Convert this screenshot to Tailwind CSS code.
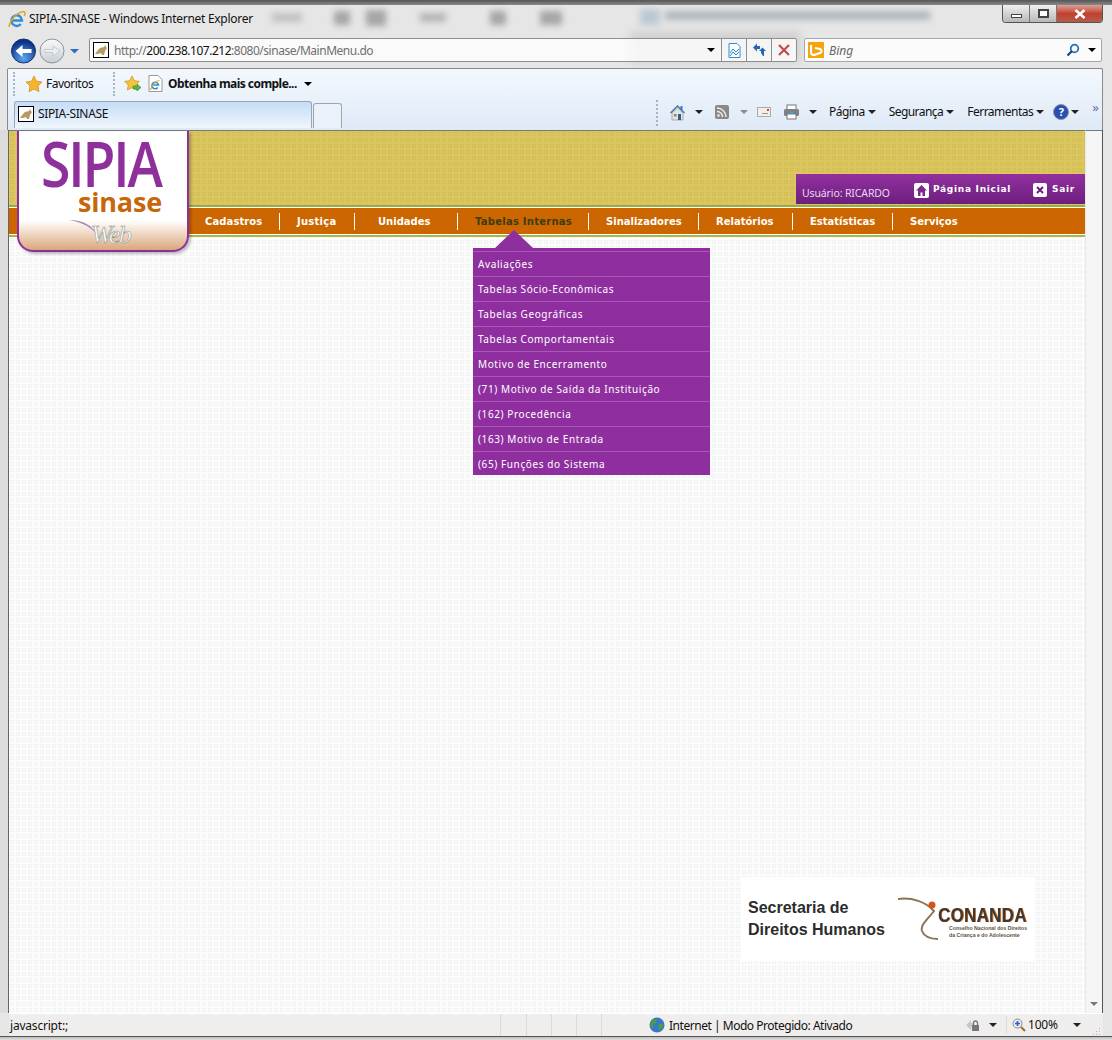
<!DOCTYPE html>
<html lang="pt-BR">
<head>
  <meta charset="UTF-8" />
  <title>SIPIA-SINASE - Windows Internet Explorer</title>
  <script src="https://cdn.jsdelivr.net/npm/@tailwindcss/browser@4"></script>
</head>
<body class="bg-[#e6e6e6]">
<div class="relative w-[1112px] h-[1040px] overflow-hidden flex flex-col bg-[#e6e6e6] font-['Noto_Sans',sans-serif] text-[12px] text-black">

  <!-- vidro desfocado atras da janela -->
  <div class="absolute left-0 top-0 w-[1112px] h-[5px] bg-gradient-to-b from-[#555] to-[#8a8a8a]"></div>
  <div class="absolute left-[272px] top-[13px] w-[30px] h-[9px] blur-[3px] bg-[#b0b0b0]/70"></div>
  <div class="absolute left-[334px] top-[11px] w-[16px] h-[14px] blur-[3px] bg-[#8a8a8a]/70"></div>
  <div class="absolute left-[366px] top-[10px] w-[20px] h-[16px] blur-[3px] bg-[#8a8a8a]/70"></div>
  <div class="absolute left-[420px] top-[13px] w-[26px] h-[9px] blur-[3px] bg-[#a0a0a0]/70"></div>
  <div class="absolute left-[490px] top-[11px] w-[16px] h-[14px] blur-[3px] bg-[#8a8a8a]/70"></div>
  <div class="absolute left-[540px] top-[11px] w-[22px] h-[14px] blur-[3px] bg-[#8a8a8a]/70"></div>
  <div class="absolute left-[640px] top-[9px] w-[20px] h-[16px] blur-[3px] bg-[#a8bccc]/70"></div>
  <div class="absolute left-[665px] top-[11px] w-[265px] h-[9px] blur-[3px] bg-[#9aa2aa]/70"></div>
  <div class="absolute left-[630px] top-[32px] w-[170px] h-[30px] blur-[5px] bg-[#c4c4c4]/70"></div>

  <!-- barra de titulo -->
  <div class="relative h-[38px] flex items-start pl-[8px] pt-[10px] shrink-0">
    <svg width="18" height="18" viewBox="0 0 18 18" class="mr-[3px]">
      <path d="M4 10.500h10A5.300 5.300 0 1 0 12.800 14" fill="none" stroke="#2e8fd8" stroke-width="2.400"/>
      <path d="M1 17C2 9 10 2 15.500 1.500c1.800 0 1.800 2.500.7 4.500" fill="none" stroke="#e8a322" stroke-width="1.500"/>
    </svg>
    <span class="leading-[17px] tracking-[-0.28px] text-[#111]">SIPIA-SINASE - Windows Internet Explorer</span>
    <div class="absolute left-[1002px] top-[5px] w-[101px] h-[18px] flex rounded-b-[4px] border border-t-0 border-[#555] overflow-hidden">
      <div class="w-[27px] bg-gradient-to-b from-[#f0f0f0] to-[#b8b8b8] border-r border-[#777] flex items-end justify-center pb-[4px]"><div class="w-[11px] h-[4px] border border-[#444] bg-white"></div></div>
      <div class="w-[27px] bg-gradient-to-b from-[#f0f0f0] to-[#b8b8b8] border-r border-[#777] flex items-center justify-center"><div class="w-[11px] h-[9px] border-2 border-[#444] bg-white"></div></div>
      <div class="flex-1 bg-gradient-to-b from-[#d9a098] via-[#c2402e] to-[#b55a4a] flex items-center justify-center">
        <svg width="12" height="10" viewBox="0 0 12 10"><path d="M1.500 1l9 8M10.500 1l-9 8" stroke="#fff" stroke-width="2.600"/></svg>
      </div>
    </div>
  </div>

  <!-- endereco e busca -->
  <div class="relative h-[30px] flex items-start shrink-0 pl-[11px]">
    <svg width="78" height="26" viewBox="0 0 78 26" class="w-[78px] shrink-0">
      <defs>
        <radialGradient id="azul" cx="50%" cy="80%" r="70%"><stop offset="0" stop-color="#5aa8f5"/><stop offset="1" stop-color="#0b2f86"/></radialGradient>
        <linearGradient id="cinza" x1="0" y1="0" x2="0" y2="1"><stop offset="0" stop-color="#fafafa"/><stop offset="1" stop-color="#c8ced4"/></linearGradient>
      </defs>
      <circle cx="12.500" cy="13" r="12" fill="url(#azul)" stroke="#1c2f66"/>
      <path d="M4.500 13l7-6v4h9v4h-9v4z" fill="#fff"/>
      <circle cx="41" cy="13" r="12" fill="url(#cinza)" stroke="#8c959c"/>
      <path d="M49 13l-7-5v3.500h-8v3h8V18z" fill="#eceff2" stroke="#b8bec4" stroke-width=".7"/>
      <path d="M59 11h9l-4.500 4.500z" fill="#2a6fc0"/>
    </svg>
    <div class="w-[708px] h-[24px] bg-white/80 border border-[#8e8e8e] rounded-[2px] flex items-center shrink-0">
      <svg width="16" height="16" viewBox="0 0 16 16" class="ml-[3px] mr-[5px] shrink-0">
        <rect x=".5" y=".5" width="15" height="15" fill="#fff" stroke="#000"/>
        <path d="M2 12l3-4 2-2 4-1 1-2 1 2 1 1-2 3-1 4H9l-1-2-3 1z" fill="#b59a63"/>
      </svg>
      <span class="mt-[1px] text-[#6f6f6f] tracking-[-0.48px]">http://<span class="text-[#111]">200.238.107.212</span>:8080/sinase/MainMenu.do</span>
      <div class="ml-auto mr-[6px] w-0 h-0 border-x-[4px] border-t-[4px] border-x-transparent border-t-black"></div>
      <div class="w-[25px] h-full border-l border-[#8e8e8e] flex items-center justify-center">
        <svg width="13" height="15" viewBox="0 0 13 15"><path d="M1 .5h8l3 3v11H1z" fill="#fff" stroke="#2f8ed0"/><path d="M2 10l3-4 3 3 3-3M2 13l3-4 3 3 3-3" fill="none" stroke="#2f8ed0"/></svg>
      </div>
      <div class="w-[25px] h-full border-l border-[#8e8e8e] flex items-center justify-center">
        <svg width="15" height="14" viewBox="0 0 15 14"><path d="M1 4.500l4-4v2.500h3v3H5v2.500zM14 8l-3.500-3.500L7 8h2v2l2 3h1V8z" fill="#2566ac"/></svg>
      </div>
      <div class="w-[25px] h-full border-l border-[#8e8e8e] flex items-center justify-center">
        <svg width="12" height="12" viewBox="0 0 12 12"><path d="M1 1l10 10M11 1L1 11" stroke="#c84a4a" stroke-width="2.200"/></svg>
      </div>
    </div>
    <div class="ml-[7px] w-[298px] h-[24px] bg-white/85 border border-[#a8a8a8] rounded-[2px] flex items-center shrink-0">
      <div class="ml-[3px] w-[16px] h-[16px] bg-[#f7a30f] flex items-center justify-center">
        <svg width="14" height="12" viewBox="0 0 14 12"><path d="M2 1v7a3 3 0 0 0 3 3l6-2c2-1 2-3 0-4L6 4" fill="none" stroke="#fff" stroke-width="2.200"/></svg>
      </div>
      <span class="ml-[5px] mt-[1px] italic text-[#666]">Bing</span>
      <svg width="14" height="14" viewBox="0 0 14 14" class="ml-auto mr-[8px]"><circle cx="8.500" cy="5.500" r="3.800" fill="none" stroke="#2a70c0" stroke-width="1.800"/><path d="M6 8l-4.500 4.500" stroke="#17417c" stroke-width="2.200"/></svg>
      <div class="mr-[5px] w-0 h-0 border-x-[4px] border-t-[4px] border-x-transparent border-t-black"></div>
    </div>
  </div>

  <!-- painel favoritos e abas -->
  <div class="ml-[7px] w-[1096px] h-[62px] shrink-0 border border-[#8a8a8a] border-b-0 bg-gradient-to-b from-[#f3f8fd] to-[#dfeaf7] flex flex-col rounded-t-[2px]">
    <div class="h-[31px] flex items-center shrink-0 relative pb-[2px]">
      <div class="ml-[5px] h-[24px] border-l-2 border-dotted border-[#a9b4bf]"></div>
      <svg width="18" height="18" viewBox="0 0 18 18" class="ml-[10px] shrink-0"><path d="M9 1l2.500 5.200 5.500.8-4 4 1 5.700L9 14l-5 2.700 1-5.700-4-4 5.500-.8z" fill="#f7b52b" stroke="#cb8a18" stroke-width=".7"/></svg>
      <span class="ml-[3px] w-[64px] text-[#111] tracking-[-0.5px]">Favoritos</span>
      <div class="ml-[3px] h-[24px] border-l-2 border-dotted border-[#a9b4bf]"></div>
      <svg width="18" height="18" viewBox="0 0 18 18" class="ml-[9px] shrink-0"><path d="M8 1l2.300 4.700 5 .7-3.600 3.600.9 5L8 12.600 3.400 15l.9-5L.7 6.400l5-.7z" fill="#f7c53b" stroke="#cb8a18" stroke-width=".7"/><path d="M9 11h4V9l4 3.500-4 3.500v-2H9z" fill="#5cb83c" stroke="#2f7d1e" stroke-width=".5"/></svg>
      <svg width="15" height="17" viewBox="0 0 15 17" class="ml-[6px] shrink-0"><path d="M1 .5h9l4 4v12H1z" fill="#fff" stroke="#999"/><path d="M4 10h6.500A3.300 3.300 0 1 0 9.800 12.600" fill="none" stroke="#2e8fd8" stroke-width="1.600"/><path d="M2.500 15c1.500-5 5-9 9-9.500" fill="none" stroke="#e8a322" stroke-width="1.100"/></svg>
      <span class="ml-[5px] font-bold tracking-[-0.55px] text-[#111]">Obtenha mais comple...</span>
      <div class="ml-[7px] w-0 h-0 border-x-[4px] border-t-[4px] border-x-transparent border-t-black"></div>
    </div>
    <div class="flex-1 flex items-start relative">
      <div class="ml-[6px] mt-[1px] w-[298px] h-[27px] shrink-0 rounded-t-[3px] border border-b-0 border-[#9aa6b2] bg-gradient-to-b from-[#c4dcf6] to-[#f0f6fc] flex items-center pl-[3px] pb-[2px]">
        <svg width="16" height="16" viewBox="0 0 16 16" class="shrink-0">
          <rect x=".5" y=".5" width="15" height="15" fill="#fff" stroke="#000"/>
          <path d="M2 12l3-4 2-2 4-1 1-2 1 2 1 1-2 3-1 4H9l-1-2-3 1z" fill="#b59a63"/>
        </svg>
        <span class="ml-[4px] tracking-[-0.35px] text-[#111]">SIPIA-SINASE</span>
      </div>
      <div class="ml-[1px] mt-[3px] w-[29px] h-[25px] shrink-0 rounded-t-[3px] border border-b-0 border-[#9aa6b2] bg-[#eaf1f9]"></div>
      <div class="ml-[314px] h-[26px] border-l-2 border-dotted border-[#a9b4bf]"></div>
      <div class="flex items-center h-[24px]">
        <svg width="17" height="17" viewBox="0 0 17 17" class="ml-[11px] shrink-0"><path d="M1 8.500L8.500 1l3 3V2h2v4l2.500 2.500-1 1-6.500-6.500L2 9.500z" fill="#3b78b8"/><path d="M3 9l5.500-5L14 9v7H3z" fill="#e9e4d4" stroke="#8b8672" stroke-width=".6"/><rect x="9" y="10" width="3" height="6" fill="#2a5f9e"/><rect x="5" y="10" width="2.500" height="2.500" fill="#5a8dc0"/></svg>
        <div class="ml-[9px] w-0 h-0 border-x-[4px] border-t-[4px] border-x-transparent border-t-[#222]"></div>
        <div class="ml-[12px] w-[14px] h-[14px] rounded-[2px] bg-[#8a8a84] flex items-center justify-center">
          <svg width="10" height="10" viewBox="0 0 10 10"><circle cx="1.500" cy="8.500" r="1.300" fill="#eee"/><path d="M0 4.500A5.500 5.500 0 0 1 5.500 10M0 1a9 9 0 0 1 9 9" fill="none" stroke="#eee" stroke-width="1.400"/></svg>
        </div>
        <div class="ml-[11px] w-0 h-0 border-x-[4px] border-t-[4px] border-x-transparent border-t-[#8a8a8a]"></div>
        <div class="ml-[9px] w-[14px] h-[10px] border border-[#aaa] bg-[#f2efe8] relative"><div class="absolute right-[1px] top-[1px] w-[2px] h-[2px] bg-[#d04040]"></div><div class="absolute left-[4px] bottom-[2px] w-[6px] h-px bg-[#999]"></div></div>
        <svg width="17" height="16" viewBox="0 0 17 16" class="ml-[12px] shrink-0"><rect x="4" y="1" width="9" height="5" fill="#fff" stroke="#777"/><rect x="1" y="5" width="15" height="7" rx="1.500" fill="#7d8288"/><rect x="4" y="10" width="9" height="5" fill="#fff" stroke="#777"/><rect x="7" y="8" width="3" height="2" fill="#3aa0e0"/></svg>
        <div class="ml-[9px] w-0 h-0 border-x-[4px] border-t-[4px] border-x-transparent border-t-[#222]"></div>
        <span class="ml-[12px] tracking-[-0.5px] text-[#111]">Página</span>
        <div class="ml-[3px] w-0 h-0 border-x-[4px] border-t-[4px] border-x-transparent border-t-[#222]"></div>
        <span class="ml-[13px] tracking-[-0.55px] text-[#111]">Segurança</span>
        <div class="ml-[3px] w-0 h-0 border-x-[4px] border-t-[4px] border-x-transparent border-t-[#222]"></div>
        <span class="ml-[13px] tracking-[-0.5px] text-[#111]">Ferramentas</span>
        <div class="ml-[3px] w-0 h-0 border-x-[4px] border-t-[4px] border-x-transparent border-t-[#222]"></div>
        <div class="ml-[9px] w-[16px] h-[16px] rounded-full bg-[#2a4fb0] border border-[#8a93a8] text-white font-bold text-[11px] leading-[14px] text-center">?</div>
        <div class="ml-[2px] w-0 h-0 border-x-[4px] border-t-[4px] border-x-transparent border-t-[#222]"></div>
        <span class="ml-[13px] -mt-[9px] text-[13px] text-[#5a6fa8] leading-none">»</span>
      </div>
    </div>
  </div>

  <!-- area da pagina -->
  <div class="flex h-[883px] shrink-0">
    <div class="w-[9px] shrink-0 border-r border-[#666] bg-[#dcdcdc]"></div>
    <div class="relative w-[1076px] shrink-0 bg-[#fcfcfc] bg-[radial-gradient(circle,#fcfcfc_1px,#f0f3f3_1.600px,#f0f3f3_2px,transparent_2.500px)] bg-size-[6px_6px] border-t border-[#777] font-['DejaVu_Sans',sans-serif]">
      <div class="relative h-[76px] bg-[#dcc65e] bg-[radial-gradient(circle,#dcc65e_1px,#d1bd5a_1.600px,#d1bd5a_2px,transparent_2.500px)] bg-size-[6px_6px] border-b-2 border-[#9aae3c]">
        <div class="absolute right-0 top-[43px] w-[289px] h-[30px] bg-gradient-to-b from-[#93309f] to-[#6c1f7e] flex items-center text-white">
          <span class="ml-[6px] mt-[10px] w-[106px] text-[10.500px] tracking-[-0.12px] text-[#e6d8f0] font-['Noto_Sans',sans-serif] whitespace-nowrap">Usuário: RICARDO</span>
          <svg width="15" height="15" viewBox="0 0 15 15" class="ml-[6px] mt-[2px] shrink-0"><rect width="15" height="15" rx="2" fill="#fff"/><path d="M7.500 2L2 7.500h2V13h2.500V9.500h2V13H11V7.500h2z" fill="#7f2790"/></svg>
          <span class="ml-[4px] mt-[2px] w-[78px] text-[9px] font-bold tracking-[0.72px] whitespace-nowrap">Página Inicial</span>
          <div class="ml-[22px] mt-[2px] w-[14px] h-[14px] rounded-[2px] bg-white flex items-center justify-center">
            <svg width="8" height="8" viewBox="0 0 8 8"><path d="M1 1l6 6M7 1L1 7" stroke="#6c1f7e" stroke-width="2"/></svg>
          </div>
          <span class="ml-[5px] mt-[2px] text-[9px] font-bold tracking-[0.72px]">Sair</span>
        </div>
      </div>

      <!-- menu -->
      <div class="h-[30px] border-t border-white border-b-2 bg-[#cc6600] border-b-[#a5b84a] relative">
        <div class="absolute left-0 right-0 bottom-0 h-px bg-white"></div>
        <div class="flex h-[27px] pl-[179px] items-center text-[10px] font-bold text-white">
          <div class="w-[92px] pl-[17px] border-r border-white leading-[17px] tracking-[0.1px]">Cadastros</div>
          <div class="w-[75px] pl-[17px] border-r border-white leading-[17px] tracking-[0.25px]">Justiça</div>
          <div class="w-[103px] pl-[23px] border-r border-white leading-[17px]">Unidades</div>
          <div class="w-[131px] pl-[17px] border-r border-white leading-[17px] tracking-[0.25px] text-[#3d3d10]">Tabelas Internas</div>
          <div class="w-[110px] pl-[17px] border-r border-white leading-[17px]">Sinalizadores</div>
          <div class="w-[94px] pl-[17px] border-r border-white leading-[17px]">Relatórios</div>
          <div class="w-[100px] pl-[17px] border-r border-white leading-[17px]">Estatísticas</div>
          <div class="w-[100px] pl-[17px] leading-[17px]">Serviços</div>
        </div>
      </div>

      <!-- logo -->
      <div class="absolute left-[8px] top-0 w-[172px] h-[121px] rounded-b-[16px] border-2 border-t-0 border-[#8f2f9f] bg-gradient-to-b from-white from-75% to-[#d9a77c] shadow-[2px_2px_3px_rgba(0,0,0,0.25)]">
        <div class="absolute left-[22px] top-[8px] font-['Open_Sans',sans-serif] font-semibold text-[63px] leading-[48px] tracking-[-2.500px] text-[#8f2f9c] scale-x-[0.85] origin-left">SIPIA</div>
        <div class="absolute left-[59px] top-[59px] font-['Open_Sans',sans-serif] font-bold text-[27px] leading-[24px] tracking-[-0.2px] text-[#c8660a]">sinase</div>
        <svg width="50" height="20" viewBox="0 0 50 20" class="absolute left-[48px] top-[88px]"><path d="M2 1c14 0 24 5 30 18C27 9 15 3 2 1z" fill="#a888b8"/></svg>
        <div class="absolute left-[72px] top-[90px] font-['Liberation_Serif',serif] italic text-[26px] leading-[28px] tracking-[-1.500px] text-white [-webkit-text-stroke:0.6px_#8a9a94]">Web</div>
      </div>

      <!-- submenu -->
      <div class="absolute left-[486px] top-[99px] w-[38px] h-[18px] bg-[#8f2f9f] [clip-path:polygon(50%_0,100%_100%,0_100%)]"></div>
      <div class="absolute left-[464px] top-[117px] w-[237px] bg-[#8f2f9f] pt-[3px] text-[10px] tracking-[0.6px] text-white font-['Noto_Sans',sans-serif]">
        <div class="h-[25px] pl-[5px] border-t border-[#a959b5] leading-[25px]">Avaliações</div>
        <div class="h-[25px] pl-[5px] border-t border-[#a959b5] leading-[25px]">Tabelas Sócio-Econômicas</div>
        <div class="h-[25px] pl-[5px] border-t border-[#a959b5] leading-[25px]">Tabelas Geográficas</div>
        <div class="h-[25px] pl-[5px] border-t border-[#a959b5] leading-[25px]">Tabelas Comportamentais</div>
        <div class="h-[25px] pl-[5px] border-t border-[#a959b5] leading-[25px]">Motivo de Encerramento</div>
        <div class="h-[25px] pl-[5px] border-t border-[#a959b5] leading-[25px]">(71) Motivo de Saída da Instituição</div>
        <div class="h-[25px] pl-[5px] border-t border-[#a959b5] leading-[25px]">(162) Procedência</div>
        <div class="h-[25px] pl-[5px] border-t border-[#a959b5] leading-[25px]">(163) Motivo de Entrada</div>
        <div class="h-[24px] pl-[5px] border-t border-[#a959b5] leading-[25px]">(65) Funções do Sistema</div>
      </div>

      <!-- rodape parceiros -->
      <div class="absolute left-[732px] top-[746px] w-[293px] h-[84px] bg-white flex items-center font-['Liberation_Sans',sans-serif]">
        <div class="ml-[7px] w-[150px] text-[16px] leading-[22px] font-bold text-[#2c2c2c] whitespace-nowrap">Secretaria de<br>Direitos Humanos</div>
        <div class="relative w-[136px] h-[60px]">
          <svg width="56" height="46" viewBox="0 0 56 46" class="absolute left-0 top-[8px]"><path d="M0 2c14-2 28 3 36 12-6 8-14 14-12 20 2 5 8 8 16 8" fill="none" stroke="#8b7355" stroke-width="2"/><circle cx="34" cy="8" r="3.500" fill="#d2561e"/></svg>
          <div class="absolute left-[40px] top-[14px] text-[20px] leading-[24px] font-bold tracking-[0.3px] text-[#3d3a36] scale-x-[0.85] origin-left [text-shadow:1px_0_0_#d26a1e]">CONANDA</div>
          <div class="absolute left-[51px] top-[36px] text-[5.200px] leading-[6.500px] font-bold text-[#5c5246] whitespace-nowrap">Conselho Nacional dos Direitos<br>da Criança e do Adolescente</div>
        </div>
      </div>
    </div>

    <!-- barra de rolagem -->
    <div class="w-[17px] shrink-0 bg-[#f5f5f5] border-l border-[#e8e8e8] border-t border-t-[#777] flex flex-col justify-end items-center pb-[7px]">
      <div class="w-0 h-0 border-x-[4px] border-t-[4px] border-x-transparent border-t-[#777]"></div>
    </div>
    <div class="w-[1px] shrink-0 bg-[#555]"></div>
  </div>

  <!-- barra de status -->
  <div class="ml-[9px] mr-[9px] h-[23px] shrink-0 bg-[#f0eeec] border-t border-white flex items-center text-[#111] relative">
    <span class="ml-px mt-[2px] w-[490px] tracking-[-0.2px]">javascript:;</span>
    <div class="w-[26px] h-full border-l border-[#dcdad8]"></div>
    <div class="w-[25px] h-full border-l border-[#dcdad8]"></div>
    <div class="w-[25px] h-full border-l border-[#dcdad8]"></div>
    <div class="w-[25px] h-full border-l border-[#dcdad8]"></div>
    <div class="w-[48px] h-full border-l border-[#dcdad8]"></div>
    <svg width="16" height="16" viewBox="0 0 16 16" class="shrink-0"><circle cx="8" cy="8" r="7.500" fill="#3878c8"/><path d="M3 4c2-2 4-2 5-1l-1 3-3 1 1 3-2 1C1 9 1 6 3 4zM10 7l4 0c0 3-1 5-3 6l-2-3z" fill="#4c9e3e"/></svg>
    <span class="ml-[4px] mt-[1px] tracking-[-0.47px] whitespace-nowrap">Internet | Modo Protegido: Ativado</span>
    <div class="absolute left-[956px] top-[2px] flex items-center h-[18px]">
      <svg width="16" height="16" viewBox="0 0 16 16" class="shrink-0"><path d="M1 8l5-5v3h3v4H6v3z" fill="#c8c8c8"/><rect x="7" y="8" width="7" height="6" fill="#777"/><path d="M8.500 8V6a2 2 0 0 1 4 0v2" fill="none" stroke="#777" stroke-width="1.300"/></svg>
      <div class="ml-[8px] w-0 h-0 border-x-[4px] border-t-[4px] border-x-transparent border-t-[#222]"></div>
      <div class="ml-[9px] h-[18px] border-l border-[#dcdad8]"></div>
      <svg width="14" height="14" viewBox="0 0 14 14" class="ml-[5px] shrink-0"><circle cx="5.500" cy="5.500" r="4.500" fill="#e6eef8" stroke="#8a8a8a"/><path d="M5.500 3v5M3 5.500h5" stroke="#2a60c0" stroke-width="1.600"/><path d="M9 9l4 4" stroke="#a06a2a" stroke-width="2"/></svg>
      <span class="ml-[2px] tracking-[-0.2px]">100%</span>
      <div class="ml-[15px] w-0 h-0 border-x-[4px] border-t-[4px] border-x-transparent border-t-[#222]"></div>
    </div>
    <svg width="8" height="8" viewBox="0 0 8 8" class="absolute right-[2px] bottom-[1px]"><path d="M6 1h1v1H6zM3 4h1v1H3zM6 4h1v1H6zM0 7h1v1H0zM3 7h1v1H3zM6 7h1v1H6z" fill="#b5b3b1"/></svg>
  </div>
  <div class="h-[1px] bg-[#555] shrink-0"></div>
  <div class="flex-1 bg-gradient-to-b from-[#bbb] to-[#e0e0e0]"></div>
</div>
</body>
</html>
